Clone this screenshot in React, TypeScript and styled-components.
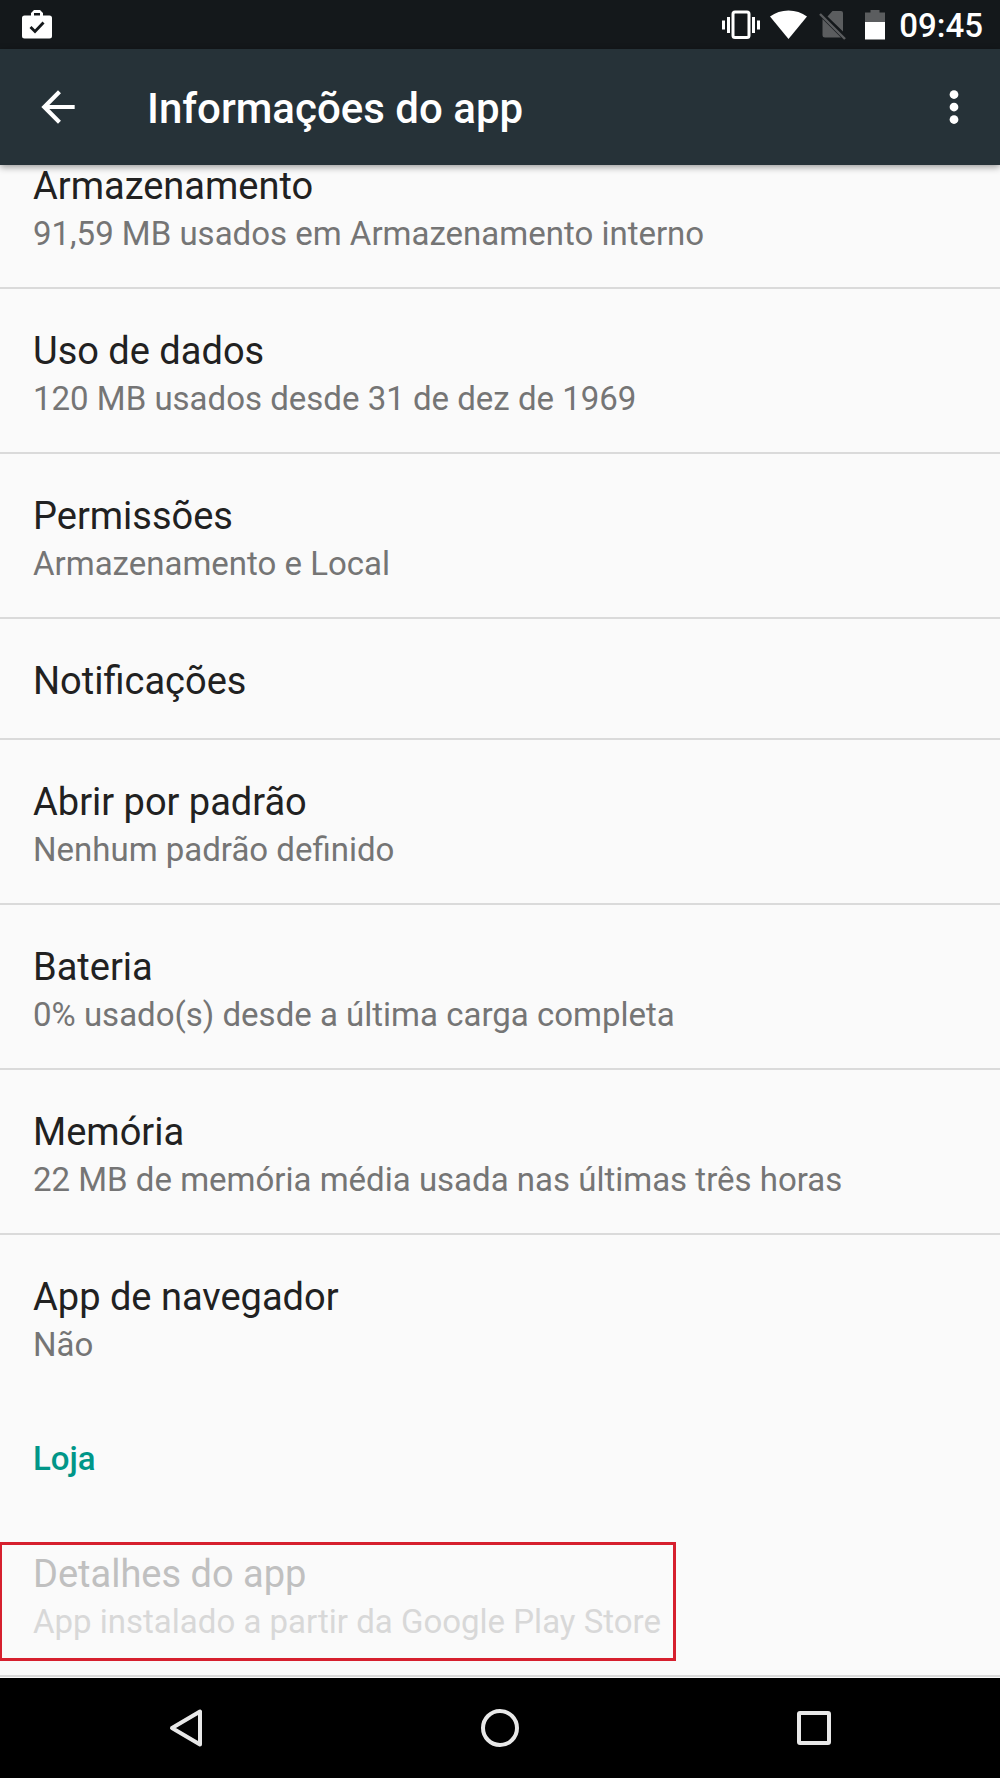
import React from "react";
import styled, { createGlobalStyle } from "styled-components";

const GlobalStyle = createGlobalStyle`
  *, *::before, *::after { box-sizing: border-box; }
  body { margin: 0; background: #fafafa; font-family: Roboto, "Noto Sans", sans-serif; }
  h1, h2, p, ul { margin: 0; padding: 0; }
  ul { list-style: none; }
`;

const Screen = styled.div`
  display: flex;
  flex-direction: column;
  min-height: 100vh;
  background: #fafafa;
`;

const StatusBar = styled.div`
  position: relative;
  z-index: 2;
  display: flex;
  align-items: center;
  justify-content: space-between;
  height: 49px;
  padding: 0 17px 0 22px;
  background: #14181b;
`;

const StatusGroup = styled.div`
  display: flex;
  align-items: center;
`;

const StatusIcon = styled.svg<{ $gap?: number }>`
  display: block;
  margin-right: ${(p) => p.$gap ?? 0}px;
`;

const Clock = styled.time`
  padding-top: 2px;
  font-size: 33px;
  font-weight: 500;
  line-height: 48px;
  color: #fff;
`;

const AppBar = styled.header`
  position: relative;
  z-index: 2;
  display: flex;
  align-items: center;
  height: 116px;
  padding: 0 21px 0 33px;
  background: #263238;
  box-shadow: 0 2px 7px rgba(0, 0, 0, 0.4);
`;

const IconButton = styled.button`
  display: flex;
  padding: 0;
  border: 0;
  background: none;
  color: #fff;
  cursor: pointer;
`;

const AppTitle = styled.h1`
  flex: 1;
  padding: 4px 0 0 64px;
  font-size: 42px;
  font-weight: 500;
  line-height: 50px;
  color: #fff;
`;

const Content = styled.main`
  flex: 1;
`;

/* The list is shown part-way scrolled, its first row tucked under the app bar. */
const SettingsList = styled.ul<{ $scrolled?: number }>`
  margin-top: -${(p) => p.$scrolled ?? 0}px;
`;

const Item = styled.li<{ $divided: boolean }>`
  border-bottom: ${(p) => (p.$divided ? "2px solid #dadada" : "0")};
`;

const Row = styled.button`
  display: block;
  width: 100%;
  padding: 36px 33px 31px;
  border: 0;
  background: none;
  font-family: inherit;
  text-align: left;
  color: #212121;
  cursor: pointer;

  &:disabled {
    color: #c0c0c0;
    cursor: default;
  }
`;

const RowText = styled.span<{ $highlighted?: boolean }>`
  position: relative;
  display: block;
  width: fit-content;

  &::after {
    content: ${(p) => (p.$highlighted ? '""' : "none")};
    position: absolute;
    inset: -6px -15px -17px -33px;
    border: 3px solid #d6202e;
    border-left-width: 2px;
  }
`;

const RowTitle = styled.span`
  display: block;
  font-size: 38px;
  line-height: 52px;
`;

const RowSummary = styled.span`
  display: block;
  font-size: 33px;
  line-height: 44px;
  color: #757575;

  ${Row}:disabled & {
    color: #d8d8d8;
  }
`;

const SectionTitle = styled.h2`
  padding: 39px 33px 31px;
  font-size: 33px;
  font-weight: 500;
  line-height: 44px;
  color: #009688;
`;

const NavBar = styled.nav`
  display: flex;
  height: 100px;
  padding: 0 29px;
  background: #000;
`;

const NavButton = styled(IconButton)`
  flex: 1;
  align-items: center;
  justify-content: center;
`;

type Setting = {
  title: string;
  summary?: string;
  divided?: boolean;
  disabled?: boolean;
  highlighted?: boolean;
};

const appSettings: Setting[] = [
  { title: "Armazenamento", summary: "91,59 MB usados em Armazenamento interno" },
  { title: "Uso de dados", summary: "120 MB usados desde 31 de dez de 1969" },
  { title: "Permissões", summary: "Armazenamento e Local" },
  { title: "Notificações" },
  { title: "Abrir por padrão", summary: "Nenhum padrão definido" },
  { title: "Bateria", summary: "0% usado(s) desde a última carga completa" },
  { title: "Memória", summary: "22 MB de memória média usada nas últimas três horas" },
  { title: "App de navegador", summary: "Não", divided: false },
];

const storeSettings: Setting[] = [
  {
    title: "Detalhes do app",
    summary: "App instalado a partir da Google Play Store",
    disabled: true,
    highlighted: true,
  },
];

function SettingItem({ title, summary, divided = true, disabled, highlighted }: Setting) {
  return (
    <Item $divided={divided}>
      <Row type="button" disabled={disabled}>
        <RowText $highlighted={highlighted}>
          <RowTitle>{title}</RowTitle>
          {summary && <RowSummary>{summary}</RowSummary>}
        </RowText>
      </Row>
    </Item>
  );
}

export default function App() {
  return (
    <Screen>
      <GlobalStyle />
      <StatusBar>
        <StatusIcon width="30" height="30" viewBox="0 0 30 30" aria-hidden="true">
          <path
            fill="#fff"
            fillRule="evenodd"
            d="M12 0h6l3 3v2.500h6.500Q30 5.500 30 8v18q0 2.500-2.500 2.500h-25Q0 28.500 0 26V8q0-2.500 2.500-2.500H9V3zM12 3v2.500h6V3z"
          />
          <path fill="none" stroke="#14181b" strokeWidth="2.800" d="M8.500 17l4.500 4.500 8.500-9" />
        </StatusIcon>
        <StatusGroup>
          <StatusIcon $gap={10} width="38" height="30" viewBox="0 0 38 30" aria-hidden="true">
            <rect x="11" y="2" width="16" height="25.500" rx="2" fill="none" stroke="#fff" strokeWidth="3" />
            <path stroke="#fff" strokeWidth="3" d="M1.500 10.500v9M6.500 7v16M31.500 7v16M36.500 10.500v9" />
          </StatusIcon>
          <StatusIcon $gap={12} width="37" height="30" viewBox="0 0 37 30" aria-hidden="true">
            <path fill="#fff" d="M18.500 29L0 6.500Q8 .5 18.500.5T37 6.500z" />
          </StatusIcon>
          <StatusIcon $gap={19} width="27" height="30" viewBox="0 0 27 30" aria-hidden="true">
            <path
              fill="#5b5d5f"
              d="M8.500 6.500l5-5.500H22q2 0 2 2v18.500zM3.500 9l18.500 18.500h-16q-2.500 0-2.500-2.500z"
            />
            <path stroke="#5b5d5f" strokeWidth="2.400" d="M1 4l25 25" />
          </StatusIcon>
          <StatusIcon $gap={14} width="20" height="30" viewBox="0 0 20 30" aria-hidden="true">
            <path fill="#5b5d5f" d="M5.500 0h9v2.500H20V13H0V2.500h5.500z" />
            <path fill="#fff" d="M0 12h20v17.500H0z" />
          </StatusIcon>
          <Clock>09:45</Clock>
        </StatusGroup>
      </StatusBar>

      <AppBar>
        <IconButton type="button" aria-label="Voltar">
          <svg width="50" height="50" viewBox="0 0 24 24" fill="currentColor">
            <path d="M20 11H7.830l5.590-5.590L12 4l-8 8 8 8 1.410-1.410L7.830 13H20v-2z" />
          </svg>
        </IconButton>
        <AppTitle>Informações do app</AppTitle>
        <IconButton type="button" aria-label="Mais opções">
          <svg width="50" height="50" viewBox="0 0 24 24" fill="currentColor">
            <circle cx="12" cy="6" r="2.100" />
            <circle cx="12" cy="12" r="2.100" />
            <circle cx="12" cy="18" r="2.100" />
          </svg>
        </IconButton>
      </AppBar>

      <Content>
        <SettingsList $scrolled={41}>
          {appSettings.map((s) => (
            <SettingItem key={s.title} {...s} />
          ))}
        </SettingsList>
        <SectionTitle>Loja</SectionTitle>
        <SettingsList>
          {storeSettings.map((s) => (
            <SettingItem key={s.title} {...s} />
          ))}
        </SettingsList>
      </Content>

      <NavBar aria-label="Sistema">
        <NavButton type="button" aria-label="Voltar">
          <svg width="34" height="40" viewBox="0 0 34 40" fill="none" stroke="#e8e8e8" strokeWidth="4" strokeLinejoin="round">
            <path d="M31 3.500v33L3 20z" />
          </svg>
        </NavButton>
        <NavButton type="button" aria-label="Início">
          <svg width="40" height="40" viewBox="0 0 40 40" fill="none" stroke="#e8e8e8" strokeWidth="4">
            <circle cx="20" cy="20" r="17" />
          </svg>
        </NavButton>
        <NavButton type="button" aria-label="Recentes">
          <svg width="40" height="40" viewBox="0 0 40 40" fill="none" stroke="#e8e8e8" strokeWidth="4">
            <rect x="5" y="5" width="30" height="30" rx="1" />
          </svg>
        </NavButton>
      </NavBar>
    </Screen>
  );
}
